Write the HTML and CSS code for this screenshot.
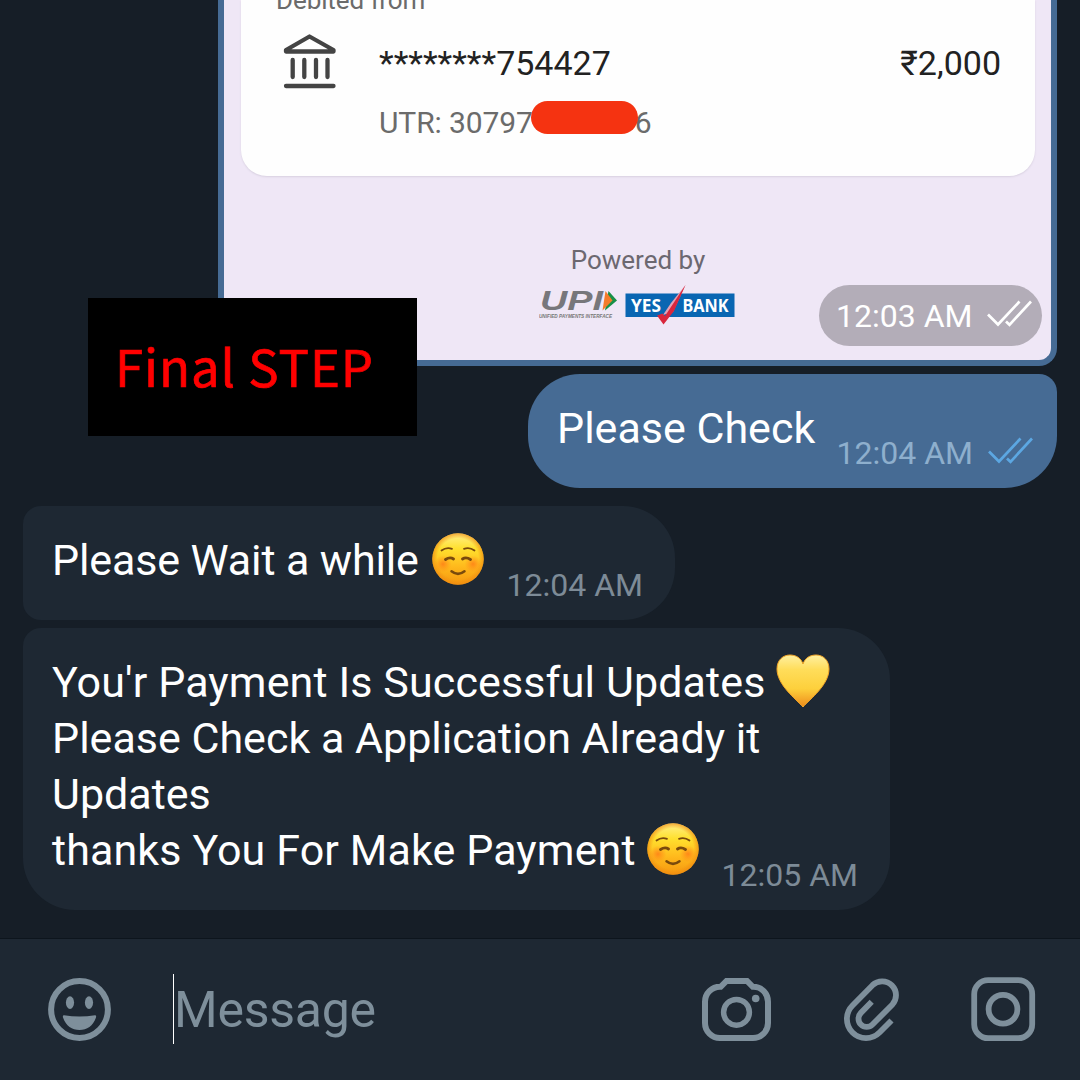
FILE: index.html
```html
<!DOCTYPE html>
<html lang="en">
<head>
<meta charset="utf-8">
<title>Chat</title>
<link rel="stylesheet" href="styles.css">
</head>
<body>
<svg class="defs" aria-hidden="true">
  <defs>
    <linearGradient id="faceFill" x1="0" y1="0" x2="0" y2="1">
      <stop offset="0" stop-color="#fff08a"/>
      <stop offset=".3" stop-color="#ffe02e"/>
      <stop offset=".65" stop-color="#ffb91c"/>
      <stop offset="1" stop-color="#f5970f"/>
    </linearGradient>
    <radialGradient id="faceEdge">
      <stop offset=".8" stop-color="#ef8a10" stop-opacity="0"/>
      <stop offset="1" stop-color="#ef8a10" stop-opacity=".7"/>
    </radialGradient>
    <radialGradient id="blush">
      <stop offset="0" stop-color="#ff7a17" stop-opacity=".8"/>
      <stop offset="1" stop-color="#ff8a17" stop-opacity="0"/>
    </radialGradient>
    <linearGradient id="heartFill" x1="0" y1="0" x2="0" y2="1">
      <stop offset="0" stop-color="#fff0a0"/>
      <stop offset=".28" stop-color="#ffdd5a"/>
      <stop offset=".65" stop-color="#fdd03c"/>
      <stop offset="1" stop-color="#ee8b1b"/>
    </linearGradient>
    <symbol id="smile" viewBox="0 0 52 52">
      <circle cx="26" cy="26" r="25.7" fill="url(#faceFill)"/>
      <circle cx="26" cy="26" r="25.7" fill="url(#faceEdge)"/>
      <circle cx="11" cy="31" r="8.5" fill="url(#blush)"/>
      <circle cx="41" cy="31" r="8.5" fill="url(#blush)"/>
      <g fill="none" stroke="#7a4a0c" stroke-linecap="round">
        <path stroke-width="1.8" d="M9.500 17.500Q14.500 13.700 20 15.800M32 15.800Q37.500 13.700 42.500 17.500"/>
        <path stroke-width="2.900" d="M13.500 26.500Q18 23.500 21.500 26M30.500 26Q34 23.500 38.500 26.500"/>
        <path stroke-width="2.500" d="M19.500 38.300Q26 43.500 32.500 38.300"/>
      </g>
    </symbol>
    <symbol id="ticks" viewBox="0 0 45 27">
      <path fill="none" stroke="currentColor" stroke-width="2.700" d="M1 14.500L11 24.500L32.500 1.500M19 21.500L22.500 24.800L44 1.500"/>
    </symbol>
  </defs>
</svg>

<main class="chat">
  <section class="photo">
    <div class="receipt">
      <div class="receipt-label">Debited from</div>
      <div class="receipt-row">
        <svg class="bank" viewBox="0 0 54 56" fill="none" stroke="#444" stroke-width="4.300" stroke-linecap="round" stroke-linejoin="round">
          <path d="M26.500 3.500L3 17V18.500H50.500V17ZM9.700 27V44M21.300 27V44M33 27V44M44.500 27V44M3 53H50.500"/>
        </svg>
        <span class="account">********754427</span>
        <span class="amount">₹2,000</span>
      </div>
      <div class="utr">UTR: 30797<span class="redact"></span>6</div>
    </div>
    <div class="powered">Powered by</div>
    <svg class="logos" viewBox="0 0 196 40">
      <text class="upi" x="1" y="25" textLength="63" lengthAdjust="spacingAndGlyphs">UPI</text>
      <path fill="#189047" d="M69.500 6L78 15.500L66 25.500Z"/>
      <path fill="#f47b2a" d="M66.500 6L73.500 15.500L63.500 25.500Z"/>
      <text class="upi-sub" x="0" y="33" textLength="73" lengthAdjust="spacingAndGlyphs">UNIFIED PAYMENTS INTERFACE</text>
      <path fill="#0966b2" d="M86.500 8.500H195.500V32H86.500Z"/>
      <text class="yes" x="92" y="26.500" textLength="30" lengthAdjust="spacingAndGlyphs">YES</text>
      <text class="yes" x="143.500" y="26.500" textLength="46" lengthAdjust="spacingAndGlyphs">BANK</text>
      <path fill="#e3a0b4" d="M146.500 0L132 18L124 30L134 27Z"/>
      <path fill="#d9263c" d="M118 30.500L123.500 28.500L126 31L146.500 0L135 26L124.500 39.500Z"/>
    </svg>
    <div class="badge"><span>12:03 AM</span><svg class="ticks"><use href="#ticks"/></svg></div>
  </section>

  <section class="bubble out">
    <div class="last"><span>Please Check</span><span class="time">12:04 AM</span><svg class="ticks"><use href="#ticks"/></svg></div>
  </section>

  <section class="bubble in first">
    <div class="last"><span class="tight">Please Wait a while</span><svg class="emoji"><use href="#smile"/></svg><span class="time">12:04 AM</span></div>
  </section>

  <section class="bubble in final">
    <div class="line"><span class="loose">You'r Payment Is Successful Updates</span><svg class="heart" viewBox="0 0 54 54"><path fill="url(#heartFill)" stroke="#f3a526" stroke-width="1" d="M27 53C20 45 1 31 1 15C1 6 7 1 14 1C20 1 25 4 27 10C29 4 34 1 40 1C47 1 53 6 53 15C53 31 34 45 27 53Z"/></svg></div>
    <div class="line">Please Check a Application Already it</div>
    <div class="line">Updates</div>
    <div class="last"><span class="loose">thanks You For Make Payment</span><svg class="emoji"><use href="#smile"/></svg><span class="time">12:05 AM</span></div>
  </section>

  <div class="step">Final STEP</div>
</main>

<footer class="composer">
  <svg class="ic-smile" viewBox="48 978 63 63">
    <circle cx="79.500" cy="1009.500" r="28.400" fill="none" stroke="currentColor" stroke-width="6"/>
    <ellipse cx="70" cy="1002.600" rx="4.100" ry="6.300" fill="currentColor"/>
    <ellipse cx="89" cy="1002.600" rx="4.100" ry="6.300" fill="currentColor"/>
    <path fill="currentColor" d="M64 1015.200Q79.500 1018 95 1015.200Q96.600 1015.200 96 1017.500C93 1026 87 1030 79.500 1030S66 1026 63 1017.500Q62.400 1015.200 64 1015.200Z"/>
  </svg>
  <div class="field">Message</div>
  <svg class="ic-camera" viewBox="702 977 70 65" fill="none" stroke="currentColor" stroke-width="6">
    <path d="M726.500 981H747L752.800 986.800H753.500A14.500 15 0 0 1 768 1001.800V1023A15 15 0 0 1 753 1038H720A15 15 0 0 1 705 1023V1001.800A15 15 0 0 1 720 986.800H720.700Z"/>
    <circle cx="736.500" cy="1012.300" r="12.900" stroke-width="5.500"/>
    <circle cx="755.700" cy="998.500" r="3.800" fill="currentColor" stroke="none"/>
  </svg>
  <svg class="ic-clip" viewBox="843 977 57 65" fill="none" stroke="currentColor" stroke-width="5.800">
    <path d="M891.500 1020.500L879.500 1032.500A19 19 0 0 1 852.500 1005.500L872.500 985.200A13.900 13.900 0 0 1 892.200 1004.800L872.500 1024.500A8.200 8.200 0 0 1 860.900 1012.900L871.700 1001.700"/>
  </svg>
  <svg class="ic-record" viewBox="971 977 65 65" fill="none" stroke="currentColor" stroke-width="5.800">
    <rect x="974.200" y="980.200" width="58" height="58" rx="14"/>
    <circle cx="1003" cy="1009.200" r="14.400"/>
  </svg>
</footer>
</body>
</html>
```

FILE: styles.css
```css
* { box-sizing: border-box; }
body {
  margin: 0;
  width: 1080px;
  height: 1080px;
  overflow: hidden;
  background: #161e27;
  color: #fff;
  font-family: Roboto, "Liberation Sans", sans-serif;
}
svg { display: block; flex: none; }
span { white-space: nowrap; }
.defs { position: absolute; width: 0; height: 0; }

.chat {
  position: relative;
  display: flex;
  flex-direction: column;
  height: 938px;
  padding: 0 23px;
}

/* payment photo */
.photo {
  position: relative;
  align-self: flex-end;
  width: 839px;
  height: 366px;
  padding: 0 16px 0 17px;
  border: solid #466b94;
  border-width: 0 6px 6px;
  border-radius: 0 0 18px 0;
  background: #efe7f6;
}
.receipt {
  height: 176px;
  padding: 0 35px;
  border-radius: 0 0 26px 26px;
  background: #fefefe;
  box-shadow: 0 1px 2px #d8d0e0;
  color: #6b6b6b;
  overflow: hidden;
}
.receipt-label { margin-top: -15px; font-size: 26px; line-height: 30px; letter-spacing: -.1px; }
.receipt-row { display: flex; align-items: center; height: 56px; margin-top: 18px; color: #222; font-size: 34px; }
.bank { width: 54px; height: 56px; margin-left: 7px; }
.account { margin-left: 42px; padding-top: 3px; }
.amount { margin: 0 -1px 0 auto; padding-top: 3px; }
.utr { display: flex; margin: 16px 0 0 103px; font-size: 30px; line-height: 36px; letter-spacing: -.1px; }
.redact { width: 107px; height: 33px; margin: -4px -3px 0 -2px; border-radius: 17px; background: #f53311; z-index: 1; }
.powered { margin-top: 69px; text-align: center; font-size: 26px; line-height: 30px; color: #6c6870; }
.logos { width: 196px; height: 40px; margin: 10px 0 0 298px; }
.upi { font: italic bold 27px "Liberation Sans", sans-serif; fill: #77777b; }
.upi-sub { font: italic bold 5.500px "Liberation Sans", sans-serif; fill: #777; }
.yes { font: bold 17px "Noto Sans", sans-serif; fill: #fff; }

.badge {
  position: absolute;
  right: 9px;
  bottom: 14px;
  display: flex;
  align-items: center;
  width: 223px;
  height: 61px;
  padding-left: 17px;
  border-radius: 31px;
  background: #b3adb8;
  color: #fff;
  font-size: 32px;
}
.ticks { width: 45px; height: 27px; }
.badge .ticks { margin: -4px 0 0 15px; }

/* messages */
.bubble {
  padding: 26px 0 0 29px;
  font-size: 43px;
  line-height: 56px;
}
.line, .last { display: flex; height: 56px; white-space: nowrap; }
.tight { letter-spacing: -.13px; }
.loose { letter-spacing: .12px; }
.out {
  align-self: flex-end;
  width: 529px;
  height: 114px;
  margin-top: 8px;
  border-radius: 52px 18px 52px 52px;
  background: #466b94;
}
.in { background: #1e2833; }
.first { width: 652px; height: 114px; margin-top: 18px; border-radius: 18px 52px 52px 18px; }
.final { width: 867px; height: 282px; margin-top: 8px; border-radius: 18px 52px 52px 52px; }
.time { margin: 34px 32px 0 auto; font-size: 32px; line-height: 38px; color: #7d8b97; }
.out .time { margin-right: 0; color: #8eafcd; }
.out .ticks { margin: 37px 24px 0 15px; color: #5ca7e2; }
.emoji { width: 52px; height: 52px; margin: 1px 0 0 13px; }
.final .emoji { margin-left: 11px; }
.heart { width: 54px; height: 54px; margin: 0 0 0 11px; }

.step {
  position: absolute;
  left: 88px;
  top: 298px;
  width: 329px;
  height: 138px;
  padding-left: 27px;
  background: #000;
  color: #f00;
  font: 51px/134px "Noto Sans CJK JP", sans-serif;
  letter-spacing: .9px;
  -webkit-text-stroke: .7px #f00;
  white-space: nowrap;
}

/* message input */
.composer {
  display: flex;
  align-items: flex-start;
  height: 142px;
  padding: 35px 44px 0 48px;
  border-top: 1px solid #0d151d;
  background: #1e2833;
  color: #7e8f9b;
}
.ic-smile { width: 63px; height: 63px; margin-top: 4px; }
.field {
  width: 240px;
  height: 70px;
  margin-left: 62px;
  border-left: 1px solid #fff;
  font-size: 50px;
  line-height: 72px;
  letter-spacing: -.25px;
}
.ic-camera { width: 70px; height: 65px; margin: 3px 0 0 auto; }
.ic-clip { width: 57px; height: 65px; margin: 3px 0 0 71px; }
.ic-record { width: 65px; height: 65px; margin: 3px 0 0 71px; }
```
